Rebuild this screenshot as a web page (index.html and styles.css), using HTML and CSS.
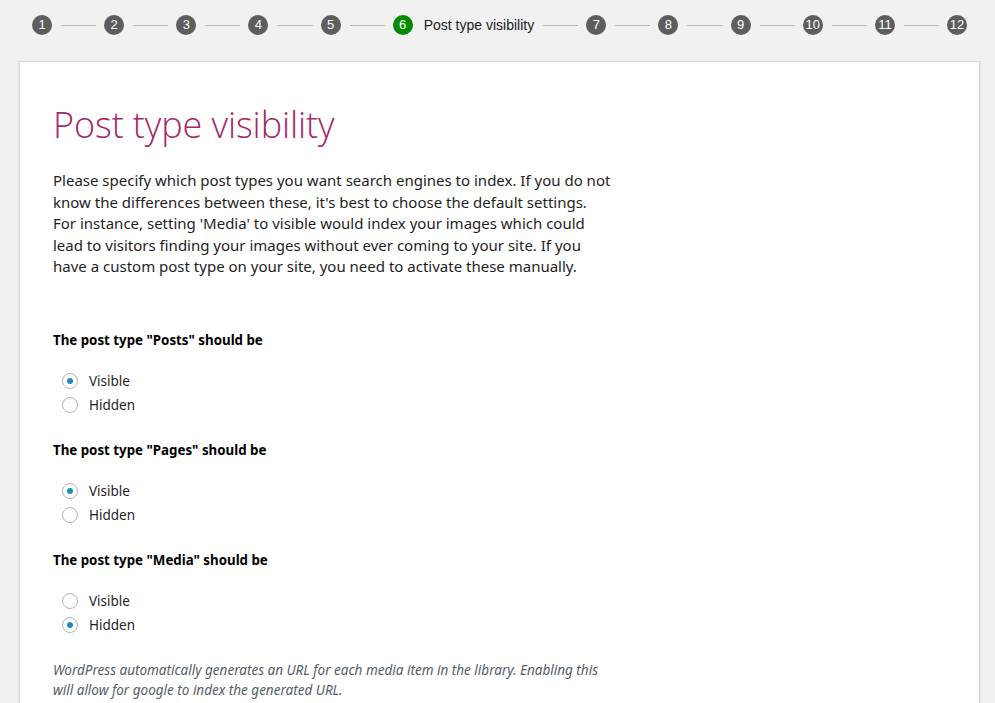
FILE: index.html
```html
<!DOCTYPE html>
<html lang="en">
<head>
<meta charset="utf-8">
<title>Post type visibility</title>
<link rel="stylesheet" href="styles.css">
</head>
<body>
<ol class="steps">
  <li class="step"><span class="num">1</span></li>
  <li class="line"></li>
  <li class="step"><span class="num">2</span></li>
  <li class="line"></li>
  <li class="step"><span class="num">3</span></li>
  <li class="line"></li>
  <li class="step"><span class="num">4</span></li>
  <li class="line"></li>
  <li class="step"><span class="num">5</span></li>
  <li class="line"></li>
  <li class="step active"><span class="num">6</span><span class="step-label">Post type visibility</span></li>
  <li class="line"></li>
  <li class="step"><span class="num">7</span></li>
  <li class="line"></li>
  <li class="step"><span class="num">8</span></li>
  <li class="line"></li>
  <li class="step"><span class="num">9</span></li>
  <li class="line"></li>
  <li class="step"><span class="num">10</span></li>
  <li class="line"></li>
  <li class="step"><span class="num">11</span></li>
  <li class="line"></li>
  <li class="step"><span class="num">12</span></li>
</ol>
<main class="card">
  <h1 class="title">Post type visibility</h1>
  <p class="intro">Please specify which post types you want search engines to index. If you do not know the differences between these, it's best to choose the default settings. For instance, setting 'Media' to visible would index your images which could lead to visitors finding your images without ever coming to your site. If you have a custom post type on your site, you need to activate these manually.</p>

  <fieldset class="group">
    <legend class="group-title">The post type "Posts" should be</legend>
    <label class="option"><input type="radio" name="posts" checked><span>Visible</span></label>
    <label class="option"><input type="radio" name="posts"><span>Hidden</span></label>
  </fieldset>

  <fieldset class="group">
    <legend class="group-title">The post type "Pages" should be</legend>
    <label class="option"><input type="radio" name="pages" checked><span>Visible</span></label>
    <label class="option"><input type="radio" name="pages"><span>Hidden</span></label>
  </fieldset>

  <fieldset class="group">
    <legend class="group-title">The post type "Media" should be</legend>
    <label class="option"><input type="radio" name="media"><span>Visible</span></label>
    <label class="option"><input type="radio" name="media" checked><span>Hidden</span></label>
  </fieldset>

  <p class="note">WordPress automatically generates an URL for each media item in the library. Enabling this will allow for google to index the generated URL.</p>
</main>
</body>
</html>
```
FILE: styles.css
```css
html, body {
  margin: 0;
  padding: 0;
}
body {
  background: #f1f1f1;
  font-family: "Noto Sans", "Open Sans", sans-serif;
  color: #1e1e1e;
  overflow: hidden;
}
.steps {
  list-style: none;
  margin: 0;
  padding: 15px 28px 0 32px;
  display: flex;
  align-items: center;
  height: 20px;
}
.step {
  display: flex;
  align-items: center;
  gap: 11px;
  flex: none;
}
.num {
  width: 20px;
  height: 20px;
  border-radius: 50%;
  background: #5d5d5d;
  color: #fff;
  font-family: "Liberation Sans", Arial, sans-serif;
  font-size: 13px;
  line-height: 20px;
  text-align: center;
  flex: none;
}
.active .num {
  background: #008a00;
}
.step-label {
  font-family: "Liberation Sans", Arial, sans-serif;
  font-size: 14px;
  color: #222;
  white-space: nowrap;
}
.line {
  flex: 1;
  height: 1px;
  background: #bbb;
  margin: 0 8px 0 9px;
}
.card {
  margin: 26px 15px 0 19px;
  background: #fff;
  border: 1px solid #d9d9d9;
  box-shadow: 0 1px 3px rgba(0,0,0,0.12);
  padding: 38px 34px 40px 33px;
  min-height: 700px;
}
.title {
  margin: 0 0 20px;
  font-family: "Open Sans", "Noto Sans", sans-serif;
  font-weight: 300;
  font-size: 36px;
  line-height: 50px;
  color: #a4286a;
  letter-spacing: -0.1px;
}
.intro {
  margin: 0 0 52px;
  width: 560px;
  font-size: 15px;
  line-height: 21.6px;
  color: #1e1e1e;
}
.group {
  border: 0;
  margin: 0 0 23px;
  padding: 0;
}
.group-title {
  padding: 0;
  margin-bottom: 19px;
  font-size: 13.3px;
  font-weight: 700;
  line-height: 20px;
  color: #000;
}
.option {
  display: flex;
  align-items: center;
  height: 24px;
  padding-left: 9px;
  font-size: 13.5px;
  color: #1e1e1e;
}
.option input {
  appearance: none;
  -webkit-appearance: none;
  width: 16px;
  height: 16px;
  margin: 0 11px 0 0;
  border: 1px solid #b4b9be;
  border-radius: 50%;
  background: #fff;
  box-shadow: inset 0 1px 2px rgba(0,0,0,0.07);
  display: grid;
  place-items: center;
}
.option input:checked::before {
  content: "";
  width: 6px;
  height: 6px;
  border-radius: 50%;
  background: #1e8cbe;
}
.note {
  margin: 7px 0 0;
  width: 555px;
  font-size: 13.5px;
  font-style: italic;
  line-height: 20px;
  color: #555d66;
}
```
